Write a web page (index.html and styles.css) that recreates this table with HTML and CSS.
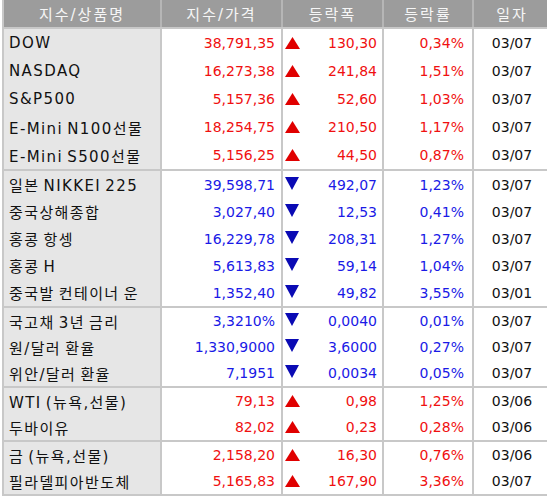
FILE: index.html
```html
<!DOCTYPE html>
<html lang="ko">
<head>
<meta charset="utf-8">
<title>해외지수</title>
<link rel="stylesheet" href="styles.css">
</head>
<body>
<div class="board">
  <div class="row head">
    <div class="c name">지수/상품명</div>
    <div class="c">지수/가격</div>
    <div class="c">등락폭</div>
    <div class="c">등락률</div>
    <div class="c last">일자</div>
  </div>

  <div class="group g1 up">
    <div class="row"><div class="c name">DOW</div><div class="c price">38,791,35</div><div class="c chg"><svg class="tri" viewBox="0 0 15 12"><polygon points="7.5,0 15,12 0,12"/></svg><span>130,30</span></div><div class="c rate">0,34%</div><div class="c date last">03/07</div></div>
    <div class="row"><div class="c name">NASDAQ</div><div class="c price">16,273,38</div><div class="c chg"><svg class="tri" viewBox="0 0 15 12"><polygon points="7.5,0 15,12 0,12"/></svg><span>241,84</span></div><div class="c rate">1,51%</div><div class="c date last">03/07</div></div>
    <div class="row"><div class="c name">S&amp;P500</div><div class="c price">5,157,36</div><div class="c chg"><svg class="tri" viewBox="0 0 15 12"><polygon points="7.5,0 15,12 0,12"/></svg><span>52,60</span></div><div class="c rate">1,03%</div><div class="c date last">03/07</div></div>
    <div class="row"><div class="c name">E-Mini N100선물</div><div class="c price">18,254,75</div><div class="c chg"><svg class="tri" viewBox="0 0 15 12"><polygon points="7.5,0 15,12 0,12"/></svg><span>210,50</span></div><div class="c rate">1,17%</div><div class="c date last">03/07</div></div>
    <div class="row"><div class="c name">E-Mini S500선물</div><div class="c price">5,156,25</div><div class="c chg"><svg class="tri" viewBox="0 0 15 12"><polygon points="7.5,0 15,12 0,12"/></svg><span>44,50</span></div><div class="c rate">0,87%</div><div class="c date last">03/07</div></div>
  </div>

  <div class="group g2 down">
    <div class="row"><div class="c name">일본 NIKKEI 225</div><div class="c price">39,598,71</div><div class="c chg"><svg class="tri" viewBox="0 0 14 13"><polygon points="0,0 14,0 7,13"/></svg><span>492,07</span></div><div class="c rate">1,23%</div><div class="c date last">03/07</div></div>
    <div class="row"><div class="c name">중국상해종합</div><div class="c price">3,027,40</div><div class="c chg"><svg class="tri" viewBox="0 0 14 13"><polygon points="0,0 14,0 7,13"/></svg><span>12,53</span></div><div class="c rate">0,41%</div><div class="c date last">03/07</div></div>
    <div class="row"><div class="c name">홍콩 항셍</div><div class="c price">16,229,78</div><div class="c chg"><svg class="tri" viewBox="0 0 14 13"><polygon points="0,0 14,0 7,13"/></svg><span>208,31</span></div><div class="c rate">1,27%</div><div class="c date last">03/07</div></div>
    <div class="row"><div class="c name">홍콩 H</div><div class="c price">5,613,83</div><div class="c chg"><svg class="tri" viewBox="0 0 14 13"><polygon points="0,0 14,0 7,13"/></svg><span>59,14</span></div><div class="c rate">1,04%</div><div class="c date last">03/07</div></div>
    <div class="row"><div class="c name">중국발 컨테이너 운</div><div class="c price">1,352,40</div><div class="c chg"><svg class="tri" viewBox="0 0 14 13"><polygon points="0,0 14,0 7,13"/></svg><span>49,82</span></div><div class="c rate">3,55%</div><div class="c date last">03/01</div></div>
  </div>

  <div class="group g3 down">
    <div class="row"><div class="c name">국고채 3년 금리</div><div class="c price">3,3210%</div><div class="c chg"><svg class="tri" viewBox="0 0 14 13"><polygon points="0,0 14,0 7,13"/></svg><span>0,0040</span></div><div class="c rate">0,01%</div><div class="c date last">03/07</div></div>
    <div class="row"><div class="c name">원/달러 환율</div><div class="c price">1,330,9000</div><div class="c chg"><svg class="tri" viewBox="0 0 14 13"><polygon points="0,0 14,0 7,13"/></svg><span>3,6000</span></div><div class="c rate">0,27%</div><div class="c date last">03/07</div></div>
    <div class="row"><div class="c name">위안/달러 환율</div><div class="c price">7,1951</div><div class="c chg"><svg class="tri" viewBox="0 0 14 13"><polygon points="0,0 14,0 7,13"/></svg><span>0,0034</span></div><div class="c rate">0,05%</div><div class="c date last">03/07</div></div>
  </div>

  <div class="group g4 up">
    <div class="row"><div class="c name">WTI (뉴욕,선물)</div><div class="c price">79,13</div><div class="c chg"><svg class="tri" viewBox="0 0 15 12"><polygon points="7.5,0 15,12 0,12"/></svg><span>0,98</span></div><div class="c rate">1,25%</div><div class="c date last">03/06</div></div>
    <div class="row"><div class="c name">두바이유</div><div class="c price">82,02</div><div class="c chg"><svg class="tri" viewBox="0 0 15 12"><polygon points="7.5,0 15,12 0,12"/></svg><span>0,23</span></div><div class="c rate">0,28%</div><div class="c date last">03/06</div></div>
  </div>

  <div class="group g5 up">
    <div class="row"><div class="c name">금 (뉴욕,선물)</div><div class="c price">2,158,20</div><div class="c chg"><svg class="tri" viewBox="0 0 15 12"><polygon points="7.5,0 15,12 0,12"/></svg><span>16,30</span></div><div class="c rate">0,76%</div><div class="c date last">03/06</div></div>
    <div class="row"><div class="c name">필라델피아반도체</div><div class="c price">5,165,83</div><div class="c chg"><svg class="tri" viewBox="0 0 15 12"><polygon points="7.5,0 15,12 0,12"/></svg><span>167,90</span></div><div class="c rate">3,36%</div><div class="c date last">03/07</div></div>
  </div>
</div>
</body>
</html>
```

FILE: styles.css
```css
html, body {
  margin: 0;
  padding: 0;
  overflow: hidden;
  background: #ffffff;
}

body {
  font-family: "DejaVu Sans", "Noto Sans CJK KR", sans-serif;
  font-size: 14px;
  color: #111111;
}

.board {
  margin-left: 2px;
  width: 548px;
  border-left: 2px solid #c8c8c8;
  border-bottom: 2px solid #c8c8c8;
}

.row {
  display: grid;
  grid-template-columns: 158px 121px 101px 90px 76px;
  height: 27px;
}

.c {
  box-sizing: border-box;
  border-right: 2px solid #c8c8c8;
  display: flex;
  align-items: center;
  white-space: nowrap;
  overflow: hidden;
}

.c.last {
  border-right: 0;
}

/* header */
.head {
  background: #9c9c9c;
  border-bottom: 2px solid #c8c8c8;
  height: 29px;
  box-sizing: border-box;
}

.head .c {
  justify-content: center;
  color: #f6f6f6;
  font-size: 15px;
  letter-spacing: 2px;
  border-right-color: #b6b6b6;
}

.head .c.last {
  border-right: 0;
}

/* groups */
.group + .group {
  border-top: 2px solid #c8c8c8;
}

.g1 .row { height: 28px; }
.g2 .row { height: 27px; }
.g3 .row,
.g4 .row,
.g5 .row { height: 26px; }

.name {
  background: #e6e6e6;
  padding-left: 5px;
  font-size: 15px;
  letter-spacing: 1.4px;
  word-spacing: -2px;
}

.head .name {
  background: transparent;
  padding-left: 0;
  letter-spacing: 2px;
  word-spacing: 0;
}

.price {
  justify-content: flex-end;
  padding-right: 6px;
}

.chg {
  justify-content: space-between;
  padding-left: 2px;
  padding-right: 5px;
}

.rate {
  justify-content: flex-end;
  padding-right: 8px;
}

.date {
  justify-content: center;
}

.tri {
  display: block;
}

.up .tri {
  width: 15px;
  height: 12px;
  fill: #e00000;
}

.down .tri {
  width: 14px;
  height: 13px;
  fill: #0a0ab4;
  margin-top: -3px;
}

.up .price,
.up .chg,
.up .rate {
  color: #f01010;
}

.down .price,
.down .chg,
.down .rate {
  color: #1a1ae6;
}
```
